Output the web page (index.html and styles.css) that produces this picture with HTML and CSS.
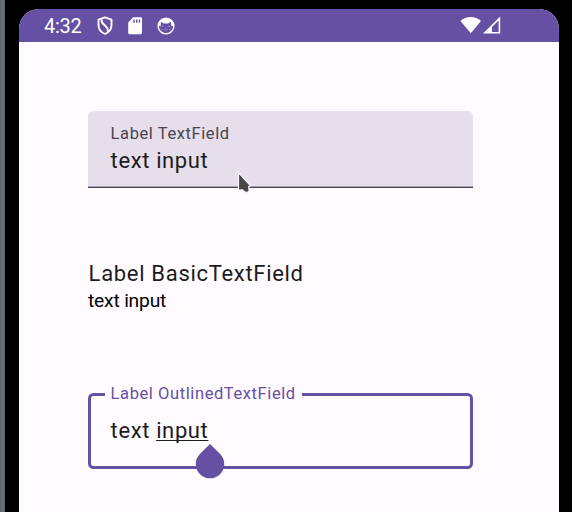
FILE: index.html
```html
<!DOCTYPE html>
<html lang="en">
<head>
<meta charset="utf-8">
<title>Text fields</title>
<link rel="stylesheet" href="styles.css">
</head>
<body>
<div class="phone">
  <header class="status-bar">
    <span class="clock">4:32</span>
    <svg class="shield" viewBox="0 0 16 20" width="16" height="20"><path d="M8 1.300L14.500 3.700v5.600c0 3.900-2.500 7-6.500 8.700C4 16.300 1.500 13.200 1.500 9.300V3.700z" fill="none" stroke="#fff" stroke-width="1.900" stroke-linejoin="round"/><path d="M4.500 3.500c-.3 2.500.6 3.700 3.200 5.800 2.300 1.900 3.600 3.500 3.100 6.300" fill="none" stroke="#fff" stroke-width="1.900"/></svg>
    <svg class="sd" viewBox="0 0 14 18" width="14" height="18"><path fill="#fff" fill-rule="evenodd" d="M5.200.3h7.300c.9 0 1.500.7 1.500 1.500v13.900c0 .9-.6 1.500-1.500 1.500H1.700c-.9 0-1.500-.6-1.500-1.500V5.400zM5.300 2.600v3.200h1.400V2.600zm2.700 0v3.200h1.400V2.600zm2.700 0v3.200h1.400V2.600z"/></svg>
    <svg class="cat" viewBox="0 0 18 18" width="18" height="18"><circle cx="9" cy="9" r="7.900" fill="none" stroke="#fff" stroke-width="1.400"/><path fill="#fff" d="M1.600 8.500C1.600 3.500 5 1.200 9 1.200s7.400 2.300 7.400 7.300l-2 1-.4-4.700-2.800 1.700H6.800L4 4.800l-.4 4.700z"/><path fill="#fff" d="M5 8.700h2v1H5zm6 0h2v1h-2zm-2.500 2h1v1h-1zM4 12h2v.8H4zm8 0h2v.8h-2zm-5 .5h4v.8H7z" opacity=".35"/></svg>
    <svg class="signals" viewBox="0 0 41 18" width="41" height="18"><path fill="#fff" d="M.5 5C6-.4 15.500-.4 21 5L10.800 17.300z"/><path fill="#fff" fill-rule="evenodd" d="M40.200.5v16.900H23zM38.600 4.400L32 11v4.900h6.600z"/></svg>
  </header>
  <main class="form">
    <div class="filled">
      <div class="label">Label TextField</div>
      <div class="value">text input</div>
      <svg class="pointer" viewBox="0 0 16 24" width="16" height="24"><path d="M1.500 1.500v17.700l3.800-.4 3.800 2.900 3.100-1.500-.6-4.700 1.900-.7z" fill="#484649" stroke="#f8f4fa" stroke-width="1.200" stroke-linejoin="round"/></svg>
    </div>
    <div class="basic">
      <div class="value">Label BasicTextField</div>
      <div class="plain">text input</div>
    </div>
    <fieldset class="outlined">
      <legend class="label">Label OutlinedTextField</legend>
      <div class="value">text <span class="composing">input</span></div>
      <svg class="handle" viewBox="0 0 30 36" width="30" height="36"><path d="M15 1l10.100 10.100a14.200 14.200 0 1 1-20.200 0z" fill="#6650a4"/></svg>
    </fieldset>
  </main>
</div>
</body>
</html>
```
FILE: styles.css
```css
* { box-sizing: border-box; }
body {
  margin: 0;
  height: 512px;
  overflow: hidden;
  padding: 9px 13px 0 19px;
  background: linear-gradient(90deg, #5d6468 0, #70777b 3px, #51575a 5px, #000 5px);
  font-family: Roboto, sans-serif;
}
.phone {
  height: 503px;
  overflow: hidden;
  border-radius: 20px 20px 0 0;
  background: #fffbff;
}
.status-bar {
  display: flex;
  align-items: flex-start;
  height: 33px;
  padding: 7px 58.500px 0 25px;
  background: #6650a4;
}
.clock {
  width: 53px;
  margin-top: -1px;
  color: #fff;
  font-size: 20px;
  line-height: 23px;
  letter-spacing: -.25px;
}
.shield { margin-right: 15px; }
.sd { margin: 1px 14.5px 0 0; }
.cat { margin-top: 1px; }
.signals { margin: 0 0 0 auto; }
.form { padding: 69px 86px 0 69px; }
.label {
  color: #49454f;
  font-size: 16.5px;
  line-height: 22px;
  letter-spacing: .59px;
}
.value {
  color: #1c1b1f;
  font-size: 22px;
  line-height: 33px;
  letter-spacing: .62px;
}
.filled {
  position: relative;
  height: 77px;
  padding: 11px 22px 0 22.6px;
  border-radius: 5.5px 5.5px 0 0;
  background: linear-gradient(#e6deeb 74.600px, #aaa2b0 75px, #aaa2b0 75.700px, #49454f 76px);
}
.filled .label { padding-top: 1px; line-height: 21px; }
.filled .value { margin-top: -.5px; }
.pointer { position: absolute; left: 149px; top: 60px; }
.basic { height: 181px; padding: 69px 0 0 .6px; }
.basic .value { letter-spacing: .6875px; }
.plain {
  margin: -1px 0 0 -.6px;
  color: #000;
  font-size: 19.25px;
  line-height: 23px;
  letter-spacing: -.2px;
}
.outlined {
  position: relative;
  height: 86px;
  margin: 14px 0 0;
  padding: 9px 19px 0 19.6px;
  min-width: 0;
  border: 3px solid #6650a4;
  border-radius: 5.5px;
}
.outlined .label {
  margin-left: -5.600px;
  padding: 0 6.300px 0 5.600px;
  color: #6650a4;
}
.composing {
  text-decoration: underline;
  text-decoration-thickness: 1px;
  text-underline-offset: 2px;
  text-decoration-skip-ink: none;
}
.handle { position: absolute; left: 103.700px; top: 38px; }
```
